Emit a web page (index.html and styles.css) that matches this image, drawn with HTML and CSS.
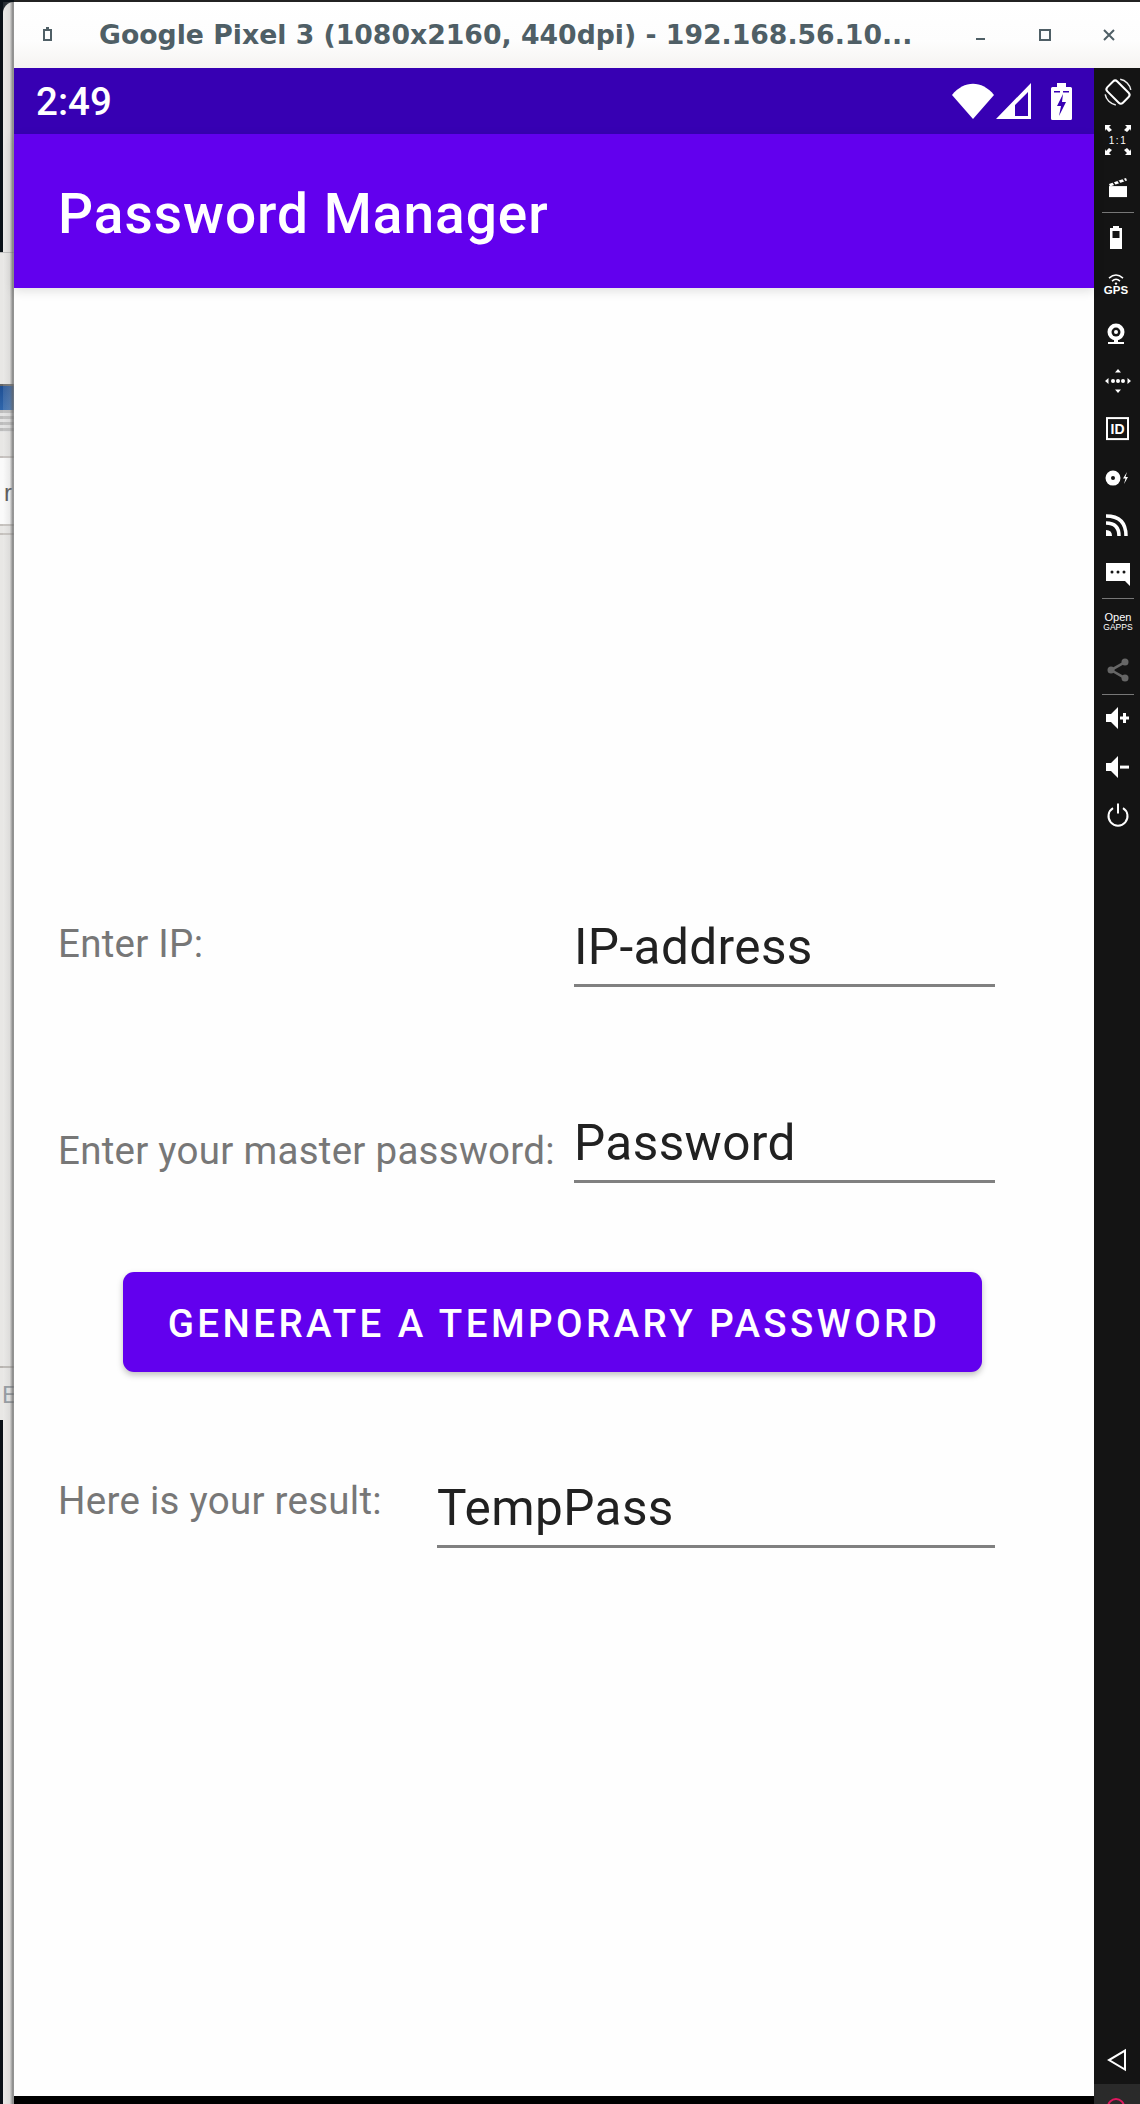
FILE: index.html
```html
<!DOCTYPE html>
<html lang="en">
<head>
  <meta charset="UTF-8">
  <meta name="viewport" content="width=device-width, initial-scale=1.0">
  <title>Password Manager</title>
  <link rel="stylesheet" href="styles.css">
</head>
<body>
  <!-- Sliver of the desktop behind the emulator window -->
  <div class="desk">
    <div class="desk-dark desk-top"></div>
    <div class="desk-light desk-a"></div>
    <div class="desk-blue"></div>
    <div class="desk-grey"></div>
    <div class="desk-light desk-b"></div>
    <div class="desk-white"><span class="desk-letter">r</span></div>
    <div class="desk-light desk-c"></div>
    <div class="desk-light desk-d"></div>
    <div class="desk-light desk-e"><span class="desk-letter desk-letter-e">E</span></div>
    <div class="desk-dark desk-bottom"></div>
    <div class="desk-shade"></div>
  </div>

  <div class="window">
    <header class="titlebar">
      <svg class="title-icon" width="12" height="14" viewBox="0 0 12 14">
        <path d="M4 0h3v2h3v12H1V2h3z M3 4v8h5V4z" fill="#4f5f66" fill-rule="evenodd"/>
      </svg>
      <div class="title-text">Google Pixel 3 (1080x2160, 440dpi) - 192.168.56.10...</div>
      <div class="title-buttons">
        <svg width="12" height="12" viewBox="0 0 12 12"><rect x="1" y="9" width="9" height="2" fill="#4f5f66"/></svg>
        <svg width="12" height="12" viewBox="0 0 12 12"><rect x="1" y="1" width="10" height="10" fill="none" stroke="#4f5f66" stroke-width="2"/></svg>
        <svg width="12" height="12" viewBox="0 0 12 12"><path d="M1 1l10 10M11 1L1 11" stroke="#4f5f66" stroke-width="2"/></svg>
      </div>
    </header>

    <div class="device">
      <div class="phone">
        <div class="statusbar">
          <span class="clock">2:49</span>
          <div class="status-icons">
            <svg class="wifi" width="42" height="36" viewBox="0 0 42 36"><path d="M0 12C12 -3 30 -3 42 12L21 36z" fill="#fff"/></svg>
            <svg class="signal" width="35" height="36" viewBox="0 0 35 36"><path d="M35 0V36H0z M32 9L19 22V33H32z" fill="#fff" fill-rule="evenodd"/></svg>
            <svg class="battery" width="21" height="37" viewBox="0 0 21 37">
              <path d="M6 0h9v4h4.500q1.500 0 1.500 1.500V35.500q0 1.500-1.500 1.500H1.500Q0 37 0 35.500V5.500Q0 4 1.500 4H6z" fill="#fff"/>
              <path d="M3 8h6v1.500H3zM12 8h6v1.500H12z" fill="#3700b3"/>
              <path d="M12 11L6 23h4l-2 10 7-14h-4z" fill="#3700b3"/>
            </svg>
          </div>
        </div>
        <div class="appbar">Password Manager</div>

        <main class="content">
          <div class="row row-ip">
            <label class="label label-ip">Enter IP:</label>
            <div class="field">IP-address</div>
          </div>
          <div class="row row-pass">
            <label class="label label-pass">Enter your master password:</label>
            <div class="field">Password</div>
          </div>
          <button class="generate">GENERATE A TEMPORARY PASSWORD</button>
          <div class="row row-result">
            <label class="label label-result">Here is your result:</label>
            <div class="field">TempPass</div>
          </div>
        </main>
        <div class="navbar"></div>
      </div>

      <aside class="tools">
        <!-- rotate -->
        <svg class="tool" viewBox="0 0 46 48">
          <rect x="17" y="13" width="14" height="22" rx="3" transform="rotate(-45 24 24)" fill="none" stroke="#fff" stroke-width="2"/>
          <path d="M26.200 11.200A13 13 0 0 1 36.800 21.800M21.800 36.800A13 13 0 0 1 11.200 26.200" fill="none" stroke="#eee" stroke-width="1.500"/>
        </svg>
        <!-- 1:1 -->
        <svg class="tool" viewBox="0 0 46 48">
          <path d="M11 9h6l-2 2 3 3-3 2-3-3-1 2zM37 9h-6l2 2-3 3 3 2 3-3 1 2zM11 39h6l-2-2 3-3-3-2-3 3-1-2zM37 39h-6l2-2-3-3 3-2 3 3 1-2z" fill="#fff"/>
          <text class="tool-text" x="24" y="28" font-size="10" text-anchor="middle" letter-spacing="1.500">1:1</text>
        </svg>
        <!-- clapper -->
        <svg class="tool" viewBox="0 0 46 48">
          <path d="M15 22h18v11H15z" fill="#fff"/>
          <path d="M15 20l17-6 1 2.500-17 6z" fill="#fff"/>
          <path d="M19 18l2 3M24 16.500l2 3M29 14.500l2 3" stroke="#141414" stroke-width="1.500"/>
        </svg>
        <div class="divider"></div>
        <!-- battery -->
        <svg class="tool" viewBox="0 0 46 48">
          <path d="M19 13h6v2h3v21H16V15h3z M18.500 18v7h7v-7z" fill="#fff" fill-rule="evenodd"/>
        </svg>
        <!-- gps -->
        <svg class="tool" viewBox="0 0 46 48">
          <path d="M15 17q7-6 14 0M18 20q4-3.500 8 0" fill="none" stroke="#fff" stroke-width="1.500"/>
          <circle cx="22" cy="22.500" r="1.200" fill="#fff"/>
          <text class="tool-text tool-bold" x="22" y="33" font-size="11.500" text-anchor="middle">GPS</text>
        </svg>
        <!-- webcam -->
        <svg class="tool" viewBox="0 0 46 48">
          <circle cx="22" cy="23" r="8.500" fill="#fff"/>
          <circle cx="22" cy="23" r="4.500" fill="#141414"/>
          <circle cx="22" cy="23" r="2" fill="#fff"/>
          <path d="M20 31h4v2h-4zM14 33h16v2H14z" fill="#fff"/>
        </svg>
        <!-- move -->
        <svg class="tool" viewBox="0 0 46 48">
          <path d="M24 12l3 3.500h-6zM24 36l3-3.500h-6zM11 24l3.500-3v6zM37 24l-3.500-3v6z" fill="#fff"/>
          <circle cx="19" cy="24" r="2" fill="#fff"/>
          <circle cx="24" cy="24" r="2" fill="#fff"/>
          <circle cx="29" cy="24" r="2" fill="#fff"/>
        </svg>
        <!-- id -->
        <svg class="tool" viewBox="0 0 46 48">
          <rect x="13" y="13" width="21" height="21" fill="none" stroke="#fff" stroke-width="2"/>
          <text class="tool-text tool-bold" x="23.500" y="29" font-size="14" text-anchor="middle">ID</text>
        </svg>
        <!-- disc -->
        <svg class="tool" viewBox="0 0 46 48">
          <circle cx="19" cy="24" r="7.500" fill="#fff"/>
          <circle cx="19" cy="24" r="2" fill="#141414"/>
          <path d="M33 18l-4 6.500h2.500L30 30l4-7h-2.500z" fill="#fff"/>
        </svg>
        <!-- rss -->
        <svg class="tool" viewBox="0 0 46 48">
          <path d="M12 14q20 0 20 20" fill="none" stroke="#fff" stroke-width="3.500"/>
          <path d="M12 21q13 0 13 13" fill="none" stroke="#fff" stroke-width="3.500"/>
          <path d="M12 28q6 0 6 6h-6z" fill="#fff"/>
        </svg>
        <!-- message -->
        <svg class="tool" viewBox="0 0 46 48">
          <path d="M12 13h24v23l-5-5H12z" fill="#fff"/>
          <circle cx="18" cy="22" r="1.500" fill="#141414"/>
          <circle cx="24" cy="22" r="1.500" fill="#141414"/>
          <circle cx="30" cy="22" r="1.500" fill="#141414"/>
        </svg>
        <div class="divider"></div>
        <!-- open gapps -->
        <svg class="tool" viewBox="0 0 46 48">
          <text class="tool-text" x="24" y="23" font-size="11" text-anchor="middle">Open</text>
          <text class="tool-text" x="24" y="32" font-size="8.500" text-anchor="middle">GAPPS</text>
        </svg>
        <!-- share -->
        <svg class="tool" viewBox="0 0 46 48">
          <path d="M31 16L17 24l14 8" fill="none" stroke="#666" stroke-width="2.500"/>
          <circle cx="31" cy="16" r="3.500" fill="#666"/>
          <circle cx="17" cy="24" r="3.500" fill="#666"/>
          <circle cx="31" cy="32" r="3.500" fill="#666"/>
        </svg>
        <div class="divider"></div>
        <!-- volume up -->
        <svg class="tool" viewBox="0 0 46 48">
          <path d="M12 20h5l7-7v22l-7-7h-5z" fill="#fff"/>
          <path d="M26 22.500h9v3h-9zM29 19h3v10h-3z" fill="#fff"/>
        </svg>
        <!-- volume down -->
        <svg class="tool" viewBox="0 0 46 48">
          <path d="M12 20h5l7-7v22l-7-7h-5z" fill="#fff"/>
          <path d="M26 22.500h9v3h-9z" fill="#fff"/>
        </svg>
        <!-- power -->
        <svg class="tool" viewBox="0 0 46 48">
          <path d="M19 17a9.500 9.500 0 1 0 10 0" fill="none" stroke="#fff" stroke-width="2"/>
          <path d="M24 12.500v10" stroke="#fff" stroke-width="2"/>
        </svg>

        <svg class="tool tool-back" viewBox="0 0 46 48">
          <path d="M31 14.500V33.500L15 24z" fill="none" stroke="#fff" stroke-width="2"/>
        </svg>
        <div class="tools-foot">
          <div class="home-ring"></div>
        </div>
      </aside>
    </div>
  </div>
</body>
</html>
```

FILE: styles.css
```css
html, body {
  margin: 0;
  padding: 0;
}

body {
  display: flex;
  width: 1140px;
  height: 2104px;
  overflow: hidden;
  font-family: Roboto, "Liberation Sans", sans-serif;
  background-color: #101010;
}

/* desktop strip */
.desk {
  position: relative;
  display: flex;
  flex-direction: column;
  flex: none;
  width: 14px;
  height: 2104px;
  overflow: hidden;
}

.desk-dark {
  position: relative;
  flex: none;
  height: 252px;
  background-color: #0a1118;
}

/* the window edge covers the dark desktop from x=3 */
.desk-dark::after {
  content: "";
  position: absolute;
  top: 0;
  right: 0;
  bottom: 0;
  left: 3px;
  background-color: #e8e7e5;
}

.desk-top::after {
  top: 2px;
  border-top-left-radius: 11px;
}

.desk-bottom {
  flex: 1;
}

.desk-light {
  flex: none;
  background-color: #e8e7e5;
}

.desk-a {
  height: 134px;
  border-top: 1px solid #bbb;
  border-bottom: 2px solid #666;
  box-sizing: border-box;
}

.desk-blue {
  flex: none;
  height: 24px;
  background: linear-gradient(#1f4f93, #2f66ab);
}

.desk-grey {
  flex: none;
  height: 22px;
  background: repeating-linear-gradient(#bcbcbc 0, #bcbcbc 3px, #e2e2e2 3px, #e2e2e2 6px);
}

.desk-b {
  height: 26px;
  border-bottom: 2px solid #c4bfbc;
  box-sizing: border-box;
}

.desk-white {
  flex: none;
  height: 66px;
  background-color: #fafafa;
  position: relative;
}

.desk-letter {
  position: absolute;
  left: 4px;
  top: 20px;
  font: 24px/30px "Liberation Sans", sans-serif;
  color: #444;
}

.desk-c {
  height: 11px;
  border-top: 2px solid #c4c0bc;
  border-bottom: 2px solid #c4c0bc;
  box-sizing: border-box;
}

.desk-d {
  height: 833px;
  border-bottom: 2px solid #b8b4b0;
  box-sizing: border-box;
}

.desk-e {
  position: relative;
  height: 52px;
}

.desk-letter-e {
  left: 2px;
  top: 12px;
  color: #8a9198;
}

.desk-shade {
  position: absolute;
  top: 2px;
  bottom: 0;
  left: 3px;
  width: 11px;
  background: linear-gradient(to right, rgba(255, 255, 255, 0.1), rgba(190, 190, 190, 0.25) 60%, rgba(110, 110, 110, 0.75) 88%, rgba(130, 130, 130, 0.8));
}

/* emulator window */
.window {
  display: flex;
  flex-direction: column;
  flex: none;
  width: 1126px;
  height: 2104px;
  padding-top: 2px;
  box-sizing: border-box;
  background-color: #222;
}

.titlebar {
  display: flex;
  align-items: center;
  flex: none;
  height: 66px;
  background: linear-gradient(#fff, #fdfdfd 60%, #f5f3f1);
}

.title-icon {
  flex: none;
  margin: -2px 0 0 28px;
}

.title-text {
  flex: none;
  width: 830px;
  margin-left: 45px;
  font: bold 26.7px/32px "DejaVu Sans", sans-serif;
  color: #4f5f66;
  white-space: nowrap;
}

.title-buttons {
  display: flex;
  gap: 52px;
  margin-left: 46px;
}

.device {
  display: flex;
  flex: 1;
  min-height: 0;
}

.phone {
  display: flex;
  flex-direction: column;
  flex: none;
  width: 1080px;
}

.statusbar {
  display: flex;
  align-items: center;
  justify-content: space-between;
  flex: none;
  height: 66px;
  padding: 0 22px 0 22px;
  background-color: #3700b3;
  color: #fff;
}

.clock {
  padding-top: 2px;
  font-size: 38.5px;
  font-weight: 500;
  line-height: 66px;
}

.status-icons {
  display: flex;
  align-items: center;
}

.signal {
  margin-left: 2px;
}

.battery {
  margin-left: 20px;
}

.appbar {
  flex: none;
  height: 154px;
  padding-left: 44px;
  background-color: #6200ee;
  color: #fff;
  font-size: 55px;
  font-weight: 500;
  letter-spacing: 1px;
  line-height: 160px;
  position: relative;
  z-index: 1;
  box-shadow: 0 3px 10px rgba(0, 0, 0, 0.12);
}

.content {
  flex: 1;
  padding-top: 627px;
  background-color: #fefefe;
}

.row {
  display: flex;
  align-items: flex-start;
  height: 72px;
  padding: 0 99px 0 44px;
}

.row-pass {
  margin-top: 124px;
}

.row-result {
  margin-top: 104px;
}

.label {
  flex: none;
  font-size: 38.5px;
  letter-spacing: 0.27px;
  line-height: 45px;
  color: #777;
}

.label-ip {
  width: 516px;
  margin-top: 6px;
}

.label-pass {
  width: 516px;
  margin-top: 17px;
}

.label-result {
  width: 379px;
  margin-top: 2px;
}

.field {
  flex: 1;
  height: 72px;
  box-sizing: border-box;
  border-bottom: 3px solid #808080;
  font-size: 49.5px;
  letter-spacing: 0.4px;
  line-height: 64px;
  color: #212121;
}

.generate {
  display: block;
  width: 859px;
  height: 100px;
  margin: 89px 0 0 109px;
  padding: 3px 0 0 3px;
  border: none;
  border-radius: 11px;
  background-color: #6200ee;
  box-shadow: 0 3px 6px rgba(0, 0, 0, 0.25);
  color: #fff;
  font-family: Roboto, sans-serif;
  font-size: 38.5px;
  font-weight: 500;
  letter-spacing: 3.43px;
}

.navbar {
  flex: none;
  height: 8px;
  background-color: #000;
}

/* emulator side toolbar */
.tools {
  display: flex;
  flex-direction: column;
  flex: none;
  width: 46px;
  background-color: #141414;
}

.tool {
  display: block;
  flex: none;
  width: 46px;
  height: 48.2px;
}

.tool-text {
  fill: #fff;
  font-family: "Liberation Sans", sans-serif;
}

.tool-bold {
  font-weight: bold;
}

.divider {
  flex: none;
  width: 32px;
  height: 1px;
  margin: -0.5px 0 -0.5px 8px;
  background-color: #777;
}

.tool-back {
  margin-top: auto;
}

.tools-foot {
  display: flex;
  justify-content: center;
  flex: none;
  height: 20px;
  padding: 14px 2px 0 0;
  box-sizing: border-box;
  background-color: #2a2a2a;
  overflow: hidden;
}

.home-ring {
  flex: none;
  width: 18px;
  height: 18px;
  box-sizing: border-box;
  border: 2px solid #e0185f;
  border-radius: 50%;
}
```
